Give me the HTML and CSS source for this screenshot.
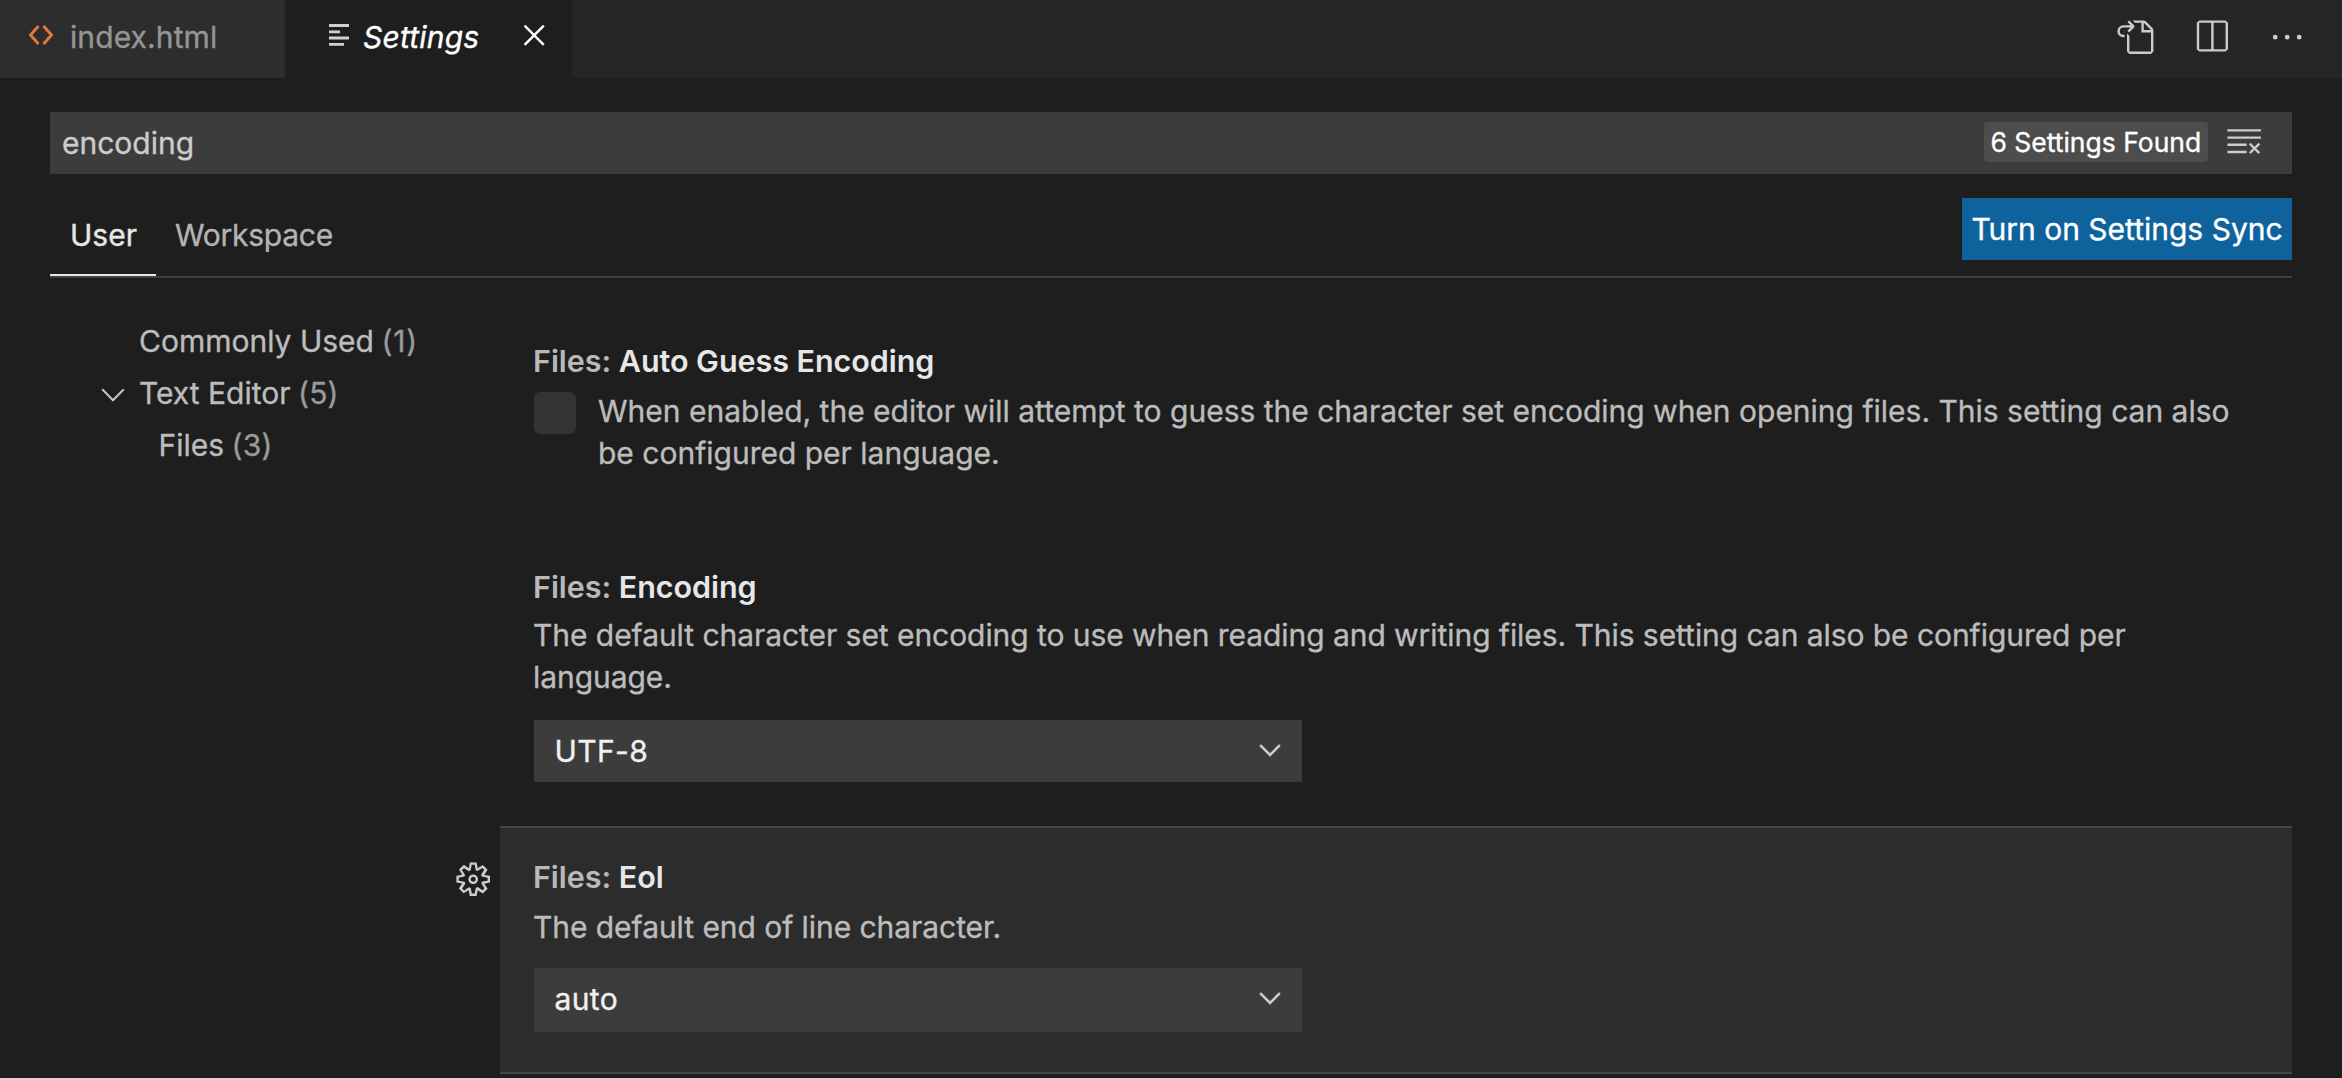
FILE: index.html
```
<!DOCTYPE html>
<html lang="en">
<head>
<meta charset="utf-8">
<title>Settings</title>
<link rel="stylesheet" href="styles.css">
</head>
<body>
<header class="tabbar">
  <div class="tab tab-file">
    <svg class="icon-html" viewBox="0 0 26 22"><path d="M10.5 2 2.5 11l8 9M15.5 2l8 9-8 9"/></svg>
    <span>index.html</span>
  </div>
  <div class="tab tab-active">
    <svg class="icon-lines" viewBox="0 0 20 22"><path d="M0 1.5h20M0 7.8h11M0 14h20M0 20.3h15"/></svg>
    <span class="tab-title">Settings</span>
    <svg class="icon" viewBox="0 0 16 16"><path d="M8 8.707l3.646 3.647.708-.707L8.707 8l3.647-3.646-.707-.708L8 7.293 4.354 3.646l-.707.708L7.293 8l-3.646 3.646.707.708L8 8.707z"/></svg>
  </div>
  <div class="actions">
    <svg class="icon" viewBox="0 0 16 16"><path fill-rule="evenodd" d="M6 5.914l2.06-2.06v-.708L5.915 1l-.707.707.043.043.25.25 1 1h-3a2.5 2.5 0 0 0 0 5H4V7h-.5a1.5 1.5 0 1 1 0-3h3L5.207 5.293 5.914 6 6 5.914zM11 2H8.328l-1-1H12l.71.29 3 3L16 5v9l-1 1H6l-1-1V6.5l1 .847V14h9V6h-4V2zm1 0v3h3l-3-3z"/></svg>
    <svg class="icon" viewBox="0 0 16 16"><path fill-rule="evenodd" d="M14 1H3L2 2v11l1 1h11l1-1V2l-1-1zM8 13H3V2h5v11zm6 0H9V2h5v11z"/></svg>
    <svg class="icon" viewBox="0 0 16 16"><path d="M4 8a1 1 0 1 1-2 0 1 1 0 0 1 2 0zm5 0a1 1 0 1 1-2 0 1 1 0 0 1 2 0zm5 0a1 1 0 1 1-2 0 1 1 0 0 1 2 0z"/></svg>
  </div>
</header>
<main class="editor">
  <div class="search">
    <span class="query">encoding</span>
    <span class="badge">6 Settings Found</span>
    <svg class="icon icon-clear" viewBox="0 0 16 16"><path d="M10 12.6l.7.7 1.6-1.6 1.6 1.6.8-.7L13 11l1.7-1.6-.8-.8-1.6 1.7-1.6-1.7-.7.8 1.6 1.6-1.6 1.6zM1 4h14V3H1v1zm0 3h14V6H1v1zm8 2.5V9H1v1h8v-.5zM9 13v-1H1v1h8z"/></svg>
  </div>
  <div class="scopes">
    <div class="scope scope-active">User</div>
    <div class="scope">Workspace</div>
    <button class="sync">Turn on Settings Sync</button>
  </div>
  <div class="body">
    <nav class="toc">
      <div class="toc-row"><span>Commonly Used</span><span class="count">(1)</span></div>
      <div class="toc-row toc-open">
        <svg class="toc-chevron" viewBox="0 0 24 14"><path d="M1.2 1.2 12 12.2 22.8 1.2"/></svg>
        <span>Text Editor</span><span class="count">(5)</span>
      </div>
      <div class="toc-row toc-child"><span>Files</span><span class="count">(3)</span></div>
    </nav>
    <div class="list">
      <section class="setting setting-check">
        <h2 class="name"><span class="category">Files:</span> Auto Guess Encoding</h2>
        <div class="check-row">
          <span class="checkbox"></span>
          <p class="desc">When enabled, the editor will attempt to guess the character set encoding when opening files. This setting can also be configured per language.</p>
        </div>
      </section>
      <section class="setting setting-encoding">
        <h2 class="name"><span class="category">Files:</span> Encoding</h2>
        <p class="desc desc-tight">The default character set encoding to use when reading and writing files. This setting can also be configured per language.</p>
        <div class="select"><span>UTF-8</span><svg class="select-chevron" viewBox="0 0 22 13"><path d="M1.2 1.2 11 11 20.8 1.2"/></svg></div>
      </section>
      <div class="focused-row">
        <svg class="icon icon-gear" viewBox="0 0 16 16"><path fill-rule="evenodd" d="M9.1 4.4L8.6 2H7.4l-.5 2.4-.7.3-2-1.3-.9.8 1.3 2-.2.7-2.4.5v1.2l2.4.5.3.8-1.3 2 .8.8 2-1.3.8.3.4 2.3h1.2l.5-2.4.8-.3 2 1.3.8-.8-1.3-2 .3-.8 2.3-.4V7.4l-2.4-.5-.3-.8 1.3-2-.8-.8-2 1.3-.7-.2zM9.4 1l.5 2.4L12 2.1l2 2-1.4 2.1 2.4.4v2.8l-2.4.5L14 12l-2 2-2.1-1.4-.5 2.4H6.6l-.5-2.4L4 13.9l-2-2 1.4-2.1L1 9.4V6.6l2.4-.5L2.1 4l2-2 2.1 1.4.4-2.4h2.8zm.6 7c0 1.1-.9 2-2 2s-2-.9-2-2 .9-2 2-2 2 .9 2 2zM8 9c.6 0 1-.4 1-1s-.4-1-1-1-1 .4-1 1 .4 1 1 1z"/></svg>
        <section class="setting setting-focused">
          <h2 class="name"><span class="category">Files:</span> Eol</h2>
          <p class="desc desc-tight">The default end of line character.</p>
          <div class="select select-tall"><span>auto</span><svg class="select-chevron" viewBox="0 0 22 13"><path d="M1.2 1.2 11 11 20.8 1.2"/></svg></div>
        </section>
      </div>
    </div>
  </div>
</main>
</body>
</html>
```
FILE: styles.css
```
* { box-sizing: border-box; }

body {
  margin: 0;
  height: 1078px;
  overflow: hidden;
  background: #1e1e1e;
  color: #bcbcbc;
  font: 400 30px/42px Inter, "Liberation Sans", sans-serif;
  -webkit-text-stroke: .35px;
}

svg { display: block; flex: none; fill: none; }
.icon { width: 38.4px; height: 38.4px; fill: #cccccc; }

/* Editor tabs */
.tabbar { display: flex; height: 78px; background: #252526; }
.tab { display: flex; align-items: center; padding-bottom: 4px; }
.tab-file {
  width: 286px;
  padding-left: 28px;
  gap: 16px;
  background: #2d2d2d;
  border-right: 2px solid #252526;
  color: #959595;
  letter-spacing: .1px;
}
.tab-active { width: 286px; padding: 0 19px 4px 43px; background: #1e1e1e; color: #fff; }
.tab-active .icon { fill: #fff; margin: 0 0 4px auto; }
.tab-title { font-style: italic; letter-spacing: .2px; margin-left: 14px; }
.icon-html { width: 26px; height: 22px; margin-bottom: 5px; stroke: #e37933; stroke-width: 2.9; }
.icon-lines { width: 20px; height: 22px; margin-bottom: 5px; stroke: #d0d0d0; stroke-width: 2.8; }
.actions { display: flex; gap: 38px; margin-left: auto; padding: 18px 35.6px 0 0; }

/* Search */
.editor { padding: 34px 50px 0; }
.search {
  display: flex;
  align-items: center;
  height: 62px;
  padding: 0 28.8px 0 12px;
  background: #3c3c3c;
  color: #ccc;
}
.badge {
  width: 224px;
  height: 40px;
  margin: 0 17px 2px auto;
  border-radius: 4px;
  background: #4d4d4d;
  color: #fff;
  font-size: 26.5px;
  line-height: 41px;
  text-align: center;
}
.icon-clear { margin-bottom: 4px; }

/* Scope tabs */
.scopes { display: flex; align-items: flex-end; height: 104px; border-bottom: 2px solid #404040; }
.scope { height: 60px; padding-left: 20px; line-height: 38px; color: #b3b3b3; }
.scope:not(.scope-active) { padding-left: 19px; letter-spacing: -.25px; }
.scope-active { width: 106px; border-bottom: 2px solid #e7e7e7; color: #e7e7e7; }
.sync {
  align-self: flex-start;
  width: 330px;
  height: 62px;
  margin: 24px 0 0 auto;
  padding: 0;
  border: 0;
  background: #0e639c;
  color: #fff;
  font: inherit;
  white-space: nowrap;
}

/* Table of contents */
.body { display: flex; }
.toc { width: 404px; padding: 37px 0 0 89px; }
.toc-row { display: flex; align-items: center; height: 52px; }
.toc-open { margin-left: -38px; }
.toc-child { padding-left: 19.5px; }
.toc-chevron { width: 24px; height: 14px; margin: 3px 14px 0 0; stroke: #c5c5c5; stroke-width: 2; }
.count { margin-left: 7.5px; color: #9a9a9a; letter-spacing: .2px; }
.toc-row:first-child .count { letter-spacing: .8px; }

/* Settings list */
.list { flex: 1; padding-top: 32px; }
.setting { padding: 30px 34px 0; margin-left: 46px; }
.name { margin: 0 0 8px -1px; font-size: 30.5px; font-weight: 600; letter-spacing: -.05px; color: #e7e7e7; -webkit-text-stroke: 0; }
.category { color: #b9b9b9; }
.desc { margin: 0 0 0 -1px; }
.desc-tight { letter-spacing: -.055px; }
.check-row { display: flex; gap: 23px; padding-bottom: 62px; }
.checkbox { flex: none; width: 42px; height: 42px; margin-top: 2px; border-radius: 6px; background: #333; }
.setting-encoding { padding-bottom: 44px; }
.setting-encoding .name { margin-bottom: 6px; }
.select {
  display: flex;
  align-items: center;
  justify-content: space-between;
  width: 768px;
  height: 62px;
  margin-top: 22px;
  padding: 0 21px 0 20.5px;
  background: #3c3c3c;
  color: #f0f0f0;
  letter-spacing: .4px;
}
.select-tall { height: 64px; margin-top: 20px; padding-bottom: 2px; }
.select-chevron { width: 22px; height: 13px; margin-bottom: 2px; stroke: #cdcdcd; stroke-width: 2.6; }
.focused-row { display: flex; }
.icon-gear { margin: 34px 7.6px 0 0; }
.setting-focused {
  flex: 1;
  height: 248px;
  margin-left: 0;
  padding-top: 28px;
  background: #2c2c2c;
  border: solid #464646;
  border-width: 2px 0;
}
```
